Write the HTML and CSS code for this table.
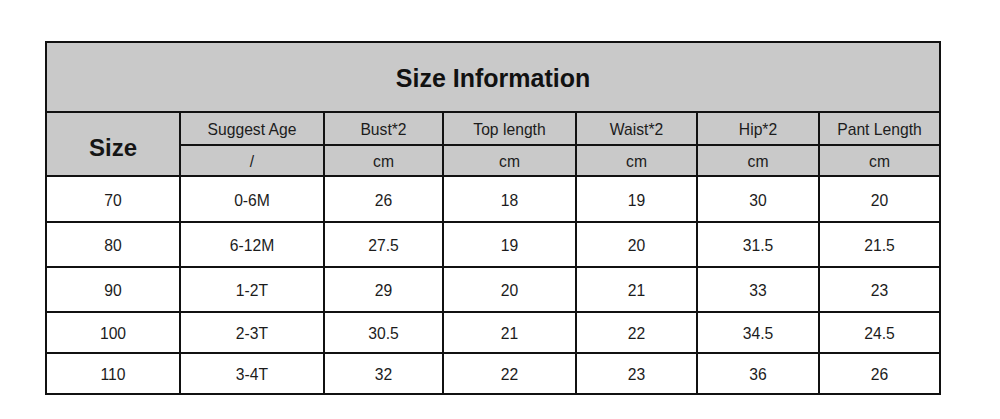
FILE: index.html
```html
<!DOCTYPE html>
<html>
<head>
<meta charset="utf-8">
<link rel="stylesheet" href="styles.css">
</head>
<body>
<table class="size-table">
  <colgroup>
    <col class="c1"><col class="c2"><col class="c3"><col class="c4"><col class="c5"><col class="c6"><col class="c7">
  </colgroup>
  <tr class="r-title"><th colspan="7" class="title">Size Information</th></tr>
  <tr class="r-head1">
    <th rowspan="2" class="size-head">Size</th>
    <th>Suggest Age</th><th>Bust*2</th><th>Top length</th><th>Waist*2</th><th>Hip*2</th><th>Pant Length</th>
  </tr>
  <tr class="r-head2">
    <th>/</th><th>cm</th><th>cm</th><th>cm</th><th>cm</th><th>cm</th>
  </tr>
  <tr class="r-a"><td>70</td><td>0-6M</td><td>26</td><td>18</td><td>19</td><td>30</td><td>20</td></tr>
  <tr class="r-b"><td>80</td><td>6-12M</td><td>27.5</td><td>19</td><td>20</td><td>31.5</td><td>21.5</td></tr>
  <tr class="r-b"><td>90</td><td>1-2T</td><td>29</td><td>20</td><td>21</td><td>33</td><td>23</td></tr>
  <tr class="r-c"><td>100</td><td>2-3T</td><td>30.5</td><td>21</td><td>22</td><td>34.5</td><td>24.5</td></tr>
  <tr class="r-c"><td>110</td><td>3-4T</td><td>32</td><td>22</td><td>23</td><td>36</td><td>26</td></tr>
</table>
</body>
</html>
```
FILE: styles.css
```css
html, body {
  margin: 0;
  padding: 0;
  background: #ffffff;
}
body {
  padding: 41px 0 0 45px;
  font-family: "Liberation Sans", Arial, sans-serif;
  color: #1c1c1c;
}
.size-table {
  table-layout: fixed;
  width: 896px;
  border-spacing: 0;
  border-collapse: separate;
  border-top: 2px solid #111;
  border-left: 2px solid #111;
}
.c1 { width: 134px; }
.c2 { width: 144px; }
.c3 { width: 119px; }
.c4 { width: 133px; }
.c5 { width: 121px; }
.c6 { width: 122px; }
.c7 { width: 121px; }
.size-table th,
.size-table td {
  border-right: 2px solid #111;
  border-bottom: 2px solid #111;
  padding: 2px 0 0 0;
  text-align: center;
  vertical-align: middle;
  font-size: 15.7px;
  font-weight: normal;
  line-height: 16px;
}
.size-table th {
  background: #c9c9c9;
}
.size-table td {
  background: #ffffff;
}
.r-title { height: 70px; }
.r-head1 { height: 33px; }
.r-head2 { height: 31px; }
.r-a { height: 46px; }
.r-b { height: 45px; }
.r-c { height: 41px; }
.size-table th.title {
  font-size: 25px;
  font-weight: bold;
  color: #111;
  line-height: 26px;
  padding-top: 1px;
}
.size-table th.size-head {
  font-size: 24px;
  font-weight: bold;
  color: #151515;
  line-height: 26px;
  padding-top: 8px;
}
.r-a td, .r-b td, .r-c td { padding-top: 3px; }
```
